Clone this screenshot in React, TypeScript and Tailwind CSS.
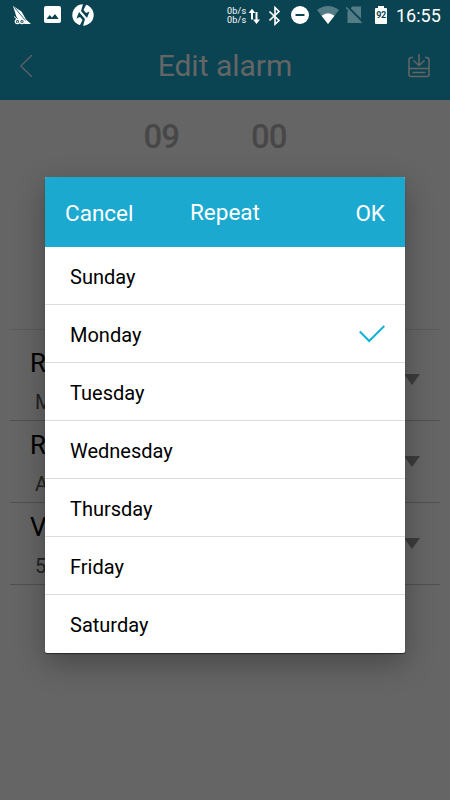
import clsx from "clsx";

const DAYS = [
	"Sunday",
	"Monday",
	"Tuesday",
	"Wednesday",
	"Thursday",
	"Friday",
	"Saturday",
];

const SETTINGS = [
	{ label: "R", value: "M" },
	{ label: "R", value: "A" },
	{ label: "V", value: "5" },
];

const StatusBar = () => (
	<div className="flex h-8 items-center text-white">
		<svg className="ml-3 h-6 w-5" viewBox="0 0 20 24" fill="currentColor">
			<path d="M1 2 9.500 7.500 14 15.500l5 4.500h-6L8 17.500 4.500 13Z" />
			<path
				d="m2.500 3.500 11 13"
				stroke="#0a4452"
				strokeWidth="0.8"
				fill="none"
			/>
			<path d="M2 12.500 5 15" stroke="currentColor" strokeWidth="1" />
			<circle cx="5.500" cy="17.500" r="2.800" />
			<circle cx="10" cy="17.500" r="2.800" />
			<circle cx="5.500" cy="17.500" r="1.500" fill="#0a4452" />
			<circle cx="10" cy="17.500" r="1.500" fill="#0a4452" />
			<circle cx="5.500" cy="17.800" r="0.700" />
			<circle cx="10" cy="17.800" r="0.700" />
		</svg>
		<svg className="mb-[3px] ml-3 h-[17px] w-[17px]" viewBox="0 0 17 17">
			<rect width="17" height="17" rx="2" fill="white" />
			<path d="m2.5 13 3.2-4 2.3 2.6L11 8l3.7 5Z" fill="#0a4452" />
		</svg>
		<svg className="ml-[11px] h-6 w-6" viewBox="0 0 24 24">
			<circle cx="11" cy="11" r="10.700" fill="white" />
			<path
				d="M11 0h3.500l-3 6L14 9l3.500-1.500L15 14 9 7Z"
				fill="#0a4452"
			/>
			<path
				d="M11 22H7.500l3-6L8 13l-3.500 1.500L7 8l6 7Z"
				fill="#0a4452"
			/>
		</svg>
		<div className="ml-[131px] w-[22px] text-[9px] leading-[9px] tracking-[0.2px]">
			<div>0b/s</div>
			<div>0b/s</div>
		</div>
		<svg
			className="-ml-px h-5 w-3"
			viewBox="0 0 12 20"
			fill="none"
			stroke="currentColor"
			strokeWidth="2"
		>
			<path d="M4 13.5V4M8.500 6v10" />
			<path
				d="M.5 7 4 2.8 7.4 7ZM5 13.5 8.500 18l3.500-4.500Z"
				fill="currentColor"
				stroke="none"
			/>
		</svg>
		<svg
			className="ml-[9px] h-5 w-3"
			viewBox="0 0 12 20"
			fill="none"
			stroke="currentColor"
			strokeWidth="1.6"
		>
			<path d="m.5 5.500 9.500 9L6 18.200V1.500L10 5.500l-9.500 9" />
		</svg>
		<svg className="mb-[2px] ml-[10px] h-[18px] w-[18px]" viewBox="0 0 18 18">
			<circle cx="9" cy="9" r="9" fill="white" />
			<path d="M4.5 9h9" stroke="#0a4452" strokeWidth="2" />
		</svg>
		<svg className="mb-[2px] ml-2 h-[18px] w-[22px]" viewBox="0 0 22 18">
			<path d="M0 4Q11-4 22 4L11 18Z" fill="#547c86" />
			<path d="M4.5 9.8q6.5-5.3 13 0L11 18Z" fill="white" />
		</svg>
		<svg className="mb-[2px] ml-[7px] h-[18px] w-4" viewBox="0 0 16 18">
			<path d="M6.500.500H15V17H1.500V5.500Z" fill="#547c86" />
			<path d="m1 0 16 16" stroke="#0a4452" strokeWidth="2" />
			<path d="m0 1.300 15.500 15.700" stroke="#547c86" strokeWidth="1.500" />
		</svg>
		<div className="mb-[2px] ml-[13px] flex h-[18px] w-3 flex-col items-center">
			<div className="h-[2px] w-[6px] bg-white" />
			<div className="flex h-4 w-3 items-center justify-center rounded-[1px] bg-white text-[9px] font-bold tracking-[-0.3px] text-[#0a4452]">
				92
			</div>
		</div>
		<div className="ml-[9px] text-[18px] leading-8">16:55</div>
	</div>
);

const TitleBar = () => (
	<div className="flex h-[68px] items-center justify-between pr-5 pl-5 text-[#656565]">
		<svg
			className="h-[22px] w-[13px]"
			viewBox="0 0 13 22"
			fill="none"
			stroke="currentColor"
			strokeWidth="1.2"
		>
			<path d="M12 0 .8 11 12 22" />
		</svg>
		<h1 className="ml-[9px] text-[30px] leading-9">Edit alarm</h1>
		<svg
			className="h-6 w-[22px]"
			viewBox="0 0 22 24"
			fill="none"
			stroke="currentColor"
			strokeWidth="1.5"
		>
			<path d="M5 3.500H3.500Q1 3.500 1 6v14.500q0 2 2 2h16q2 0 2-2V6q0-2.500-2.500-2.500H17M1 14.500h20M4.500 18.500h13" />
			<path d="M11 0v11.500M5.500 6.500l5.500 5 5.500-5" />
		</svg>
	</div>
);

const RepeatDialog = () => (
	<div className="absolute top-[177px] left-[45px] w-[360px] overflow-hidden rounded-[2px] bg-white shadow-[0_1px_1px_0_rgba(0,0,0,0.5),0_10px_30px_rgba(0,0,0,0.3)]">
		<div className="grid h-[70px] grid-cols-3 items-center bg-[#1ba9cf] px-5 pt-[3px] text-[22.500px] text-white">
			<button className="text-left">Cancel</button>
			<h2 className="pb-px text-center">Repeat</h2>
			<button className="text-right">OK</button>
		</div>
		<ul>
			{DAYS.map((day, i) => (
				<li
					key={day}
					className={clsx(
						"flex h-[58px] items-center justify-between pr-5 pl-[25px] text-[20px] text-black",
						i < DAYS.length - 1 && "border-b border-[#dcdcdc]",
					)}
				>
					<span className={i < DAYS.length - 1 ? "pt-[2px]" : "pt-px"}>
						{day}
					</span>
					{day === "Monday" && (
						<svg
							className="h-[18px] w-[26px]"
							viewBox="0 0 26 18"
							fill="none"
							stroke="#12b2d6"
							strokeWidth="2"
						>
							<path d="m.8 6.500 9.400 9.500L25.300 1" />
						</svg>
					)}
				</li>
			))}
		</ul>
	</div>
);

export default function App() {
	return (
		<div className="relative h-[800px] w-[450px] overflow-hidden bg-[#656565] font-['Roboto',sans-serif]">
			<header className="bg-[#0a4452]">
				<StatusBar />
				<TitleBar />
			</header>

			<div className="flex h-[229px] justify-center gap-[72px] pt-[18px] pr-5 text-[33px] leading-[38px] font-medium tracking-[-1px] text-[#474747]">
				<span>09</span>
				<span>00</span>
			</div>

			<div className="mx-[10px] border-t border-[#595959] pt-[9px]">
				{SETTINGS.map(({ label, value }, i) => (
					<div
						key={i}
						className="flex h-[82px] items-center justify-between border-b border-[#505050] pr-5 pl-5"
					>
						<div className="pt-[2px]">
							<div className="text-[26px] leading-[42px] text-black">
								{label}
							</div>
							<div className="pl-[5px] text-[20px] leading-9 text-[#222]">
								{value}
							</div>
						</div>
						<svg className="h-[11px] w-4" viewBox="0 0 16 11">
							<path d="M0 0h16L8 11Z" fill="#3c3c3c" />
						</svg>
					</div>
				))}
			</div>

			<RepeatDialog />
		</div>
	);
}
